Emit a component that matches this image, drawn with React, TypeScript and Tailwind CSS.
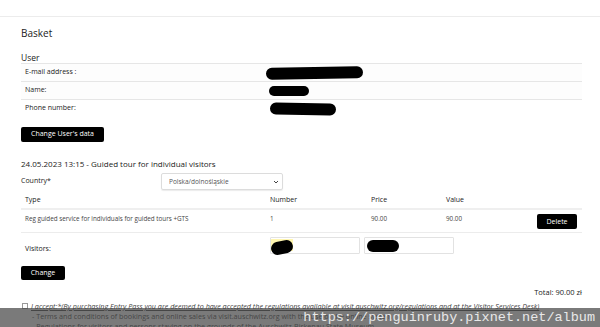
import React from "react";

function Blob({ w, h, className = "" }: { w: number; h: number; className?: string }) {
  return (
    <div
      className={"bg-black rounded-full " + className}
      style={{ width: w, height: h }}
    />
  );
}

export default function App() {
  return (
    <div className="relative w-[600px] h-[327px] overflow-hidden bg-white text-[#222] font-['Open_Sans',sans-serif]">
      <div className="h-[17px] border-b border-[#ececec]" />
      <div className="pl-[21px] pr-[18px]">
        <div className="mt-[9px] text-[10px] leading-[14px]">Basket</div>
        <div className="mt-[12px] text-[8.5px] leading-[11px]">User</div>
        <div className="text-[7px]">
          <div className="flex items-center h-[18px] border-t border-[#e6e6e6] bg-[#fdfdfd] pl-[4px]">
            <div className="w-[241px]">E-mail address :</div>
            <Blob w={97} h={12} className="-rotate-1" />
          </div>
          <div className="flex items-center h-[18px] border-t border-[#e6e6e6] bg-[#fdfdfd] pl-[4px]">
            <div className="w-[244px]">Name:</div>
            <Blob w={40} h={10} />
          </div>
          <div className="flex items-center h-[18px] border-t border-[#e6e6e6] pl-[4px]">
            <div className="w-[245px]">Phone number:</div>
            <Blob w={66} h={12} className="rotate-1" />
          </div>
        </div>
        <button className="mt-[10px] h-[15px] w-[83px] bg-black text-white text-[7px] rounded-[2px] flex items-center justify-center">
          Change User's data
        </button>
        <div className="mt-[16px] text-[8px] leading-[12px]">
          24.05.2023 13:15 - Guided tour for individual visitors
        </div>
        <div className="flex items-center h-[23px] text-[7px]">
          <div className="w-[140px]">Country*</div>
          <div className="flex items-center justify-between w-[122px] h-[17px] border border-[#dcdcdc] rounded-[2px] shadow-[0_1px_1px_rgba(0,0,0,0.08)] pl-[7px] pr-[3px] text-[6.5px] text-[#555]">
            <span>Polska/dolnośląskie</span>
            <svg width="6" height="4" viewBox="0 0 6 4">
              <path d="M1 1l2 2 2-2" stroke="#444" strokeWidth="1" fill="none" />
            </svg>
          </div>
        </div>
        <div className="text-[7px]">
          <div className="flex items-center h-[17px] border-b-2 border-[#efefef]">
            <div className="w-[245px] pl-[4px]">Type</div>
            <div className="w-[101px] pl-[4px]">Number</div>
            <div className="w-[75px] pl-[4px]">Price</div>
            <div className="pl-[4px]">Value</div>
          </div>
          <div className="flex h-[23px] border-b border-[#ececec] text-[6.3px] leading-[10px] text-[#444]">
            <div className="w-[245px] pl-[4px] pt-[4px]">Reg guided service for individuals for guided tours +GTS</div>
            <div className="w-[101px] pl-[4px] pt-[4px]">1</div>
            <div className="w-[75px] pl-[4px] pt-[4px]">90.00</div>
            <div className="flex-1 pl-[4px] pt-[4px]">90.00</div>
            <div className="pr-[5px] pt-[4px]">
              <button className="h-[15px] w-[40px] bg-black text-white text-[7px] rounded-[2px] flex items-center justify-center">
                Delete
              </button>
            </div>
          </div>
          <div className="flex items-start h-[25px] pt-[4px]">
            <div className="w-[249px] pl-[4px] pt-[6px] leading-[12px]">Visitors:</div>
            <div className="relative w-[90px] h-[17px] border border-[#e2e2e2] rounded-[1px]">
              <div className="absolute left-0 top-[1px] w-[22px] h-[12px] bg-[#fff6b0]" />
              <Blob w={22} h={13} className="absolute left-0 top-[3px] -rotate-12" />
            </div>
            <div className="relative ml-[4px] w-[90px] h-[17px] border border-[#e2e2e2] rounded-[1px]">
              <Blob w={32} h={12} className="absolute left-[2px] top-[2px]" />
            </div>
          </div>
        </div>
        <button className="mt-[8px] h-[14px] w-[44px] bg-black text-white text-[7px] rounded-[2px] flex items-center justify-center">
          Change
        </button>
        <div className="mt-[6px] text-right text-[7.5px] leading-[12px]">Total: 90.00 zł</div>
        <div className="mt-[3px] text-[7.2px] leading-[10px] text-[#444] italic">
          <div className="flex items-center">
            <span className="inline-block w-[6px] h-[6px] border border-[#999] ml-[1px] mr-[3px] not-italic" />
            <span className="underline whitespace-nowrap">
              I accept:*(By purchasing Entry Pass you are deemed to have accepted the regulations available at visit.auschwitz.org/regulations and at the Visitor Services Desk)
            </span>
          </div>
          <div className="pl-[11px] not-italic whitespace-nowrap">
            - Terms and conditions of bookings and online sales via visit.auschwitz.org with the use of the online system
          </div>
          <div className="pl-[11px] not-italic whitespace-nowrap">
            - Regulations for visitors and persons staying on the grounds of the Auschwitz-Birkenau State Museum.
          </div>
        </div>
      </div>
      <div className="absolute left-0 right-0 bottom-0 h-[19px] bg-[rgba(70,70,70,0.72)] flex items-center justify-end pr-[5px]">
        <span className="font-['Liberation_Mono',monospace] text-[13.5px] text-[#e8e8e8] leading-none">
          https://penguinruby.pixnet.net/album
        </span>
      </div>
    </div>
  );
}
